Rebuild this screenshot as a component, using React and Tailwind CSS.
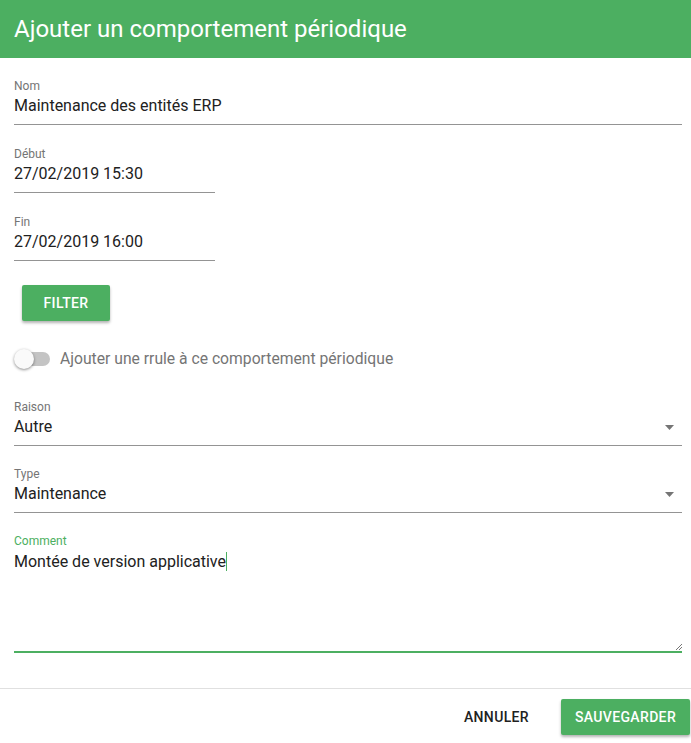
import React from "react";

function Field({ label, value, width = "w-full", select = false }) {
  return (
    <div className={width}>
      <div className="text-[12px] leading-[14px] text-[#757575]">{label}</div>
      <div className="flex items-center mt-[1px] pb-[6px] border-b border-[#949494]">
        <span className="flex-1 text-[16px] leading-[24px] text-[#212121]">{value}</span>
        {select && (
          <svg width="9" height="5" viewBox="0 0 9 5" className="mr-[8px]">
            <path d="M0 0 L9 0 L4.5 5 Z" fill="#757575" />
          </svg>
        )}
      </div>
    </div>
  );
}

export default function App() {
  return (
    <div className="w-[691px] h-[743px] bg-white flex flex-col" style={{ fontFamily: "Roboto, 'Liberation Sans', sans-serif" }}>
      <div className="h-[58px] bg-[#4caf61] flex items-center px-[14px]">
        <h1 className="text-white text-[24px] font-normal">Ajouter un comportement périodique</h1>
      </div>

      <div className="flex flex-col pl-[14px] pr-[9px] pt-[21px]">
        <Field label="Nom" value="Maintenance des entités ERP" />
        <div className="mt-[22px]"><Field label="Début" value="27/02/2019 15:30" width="w-[201px]" /></div>
        <div className="mt-[22px]"><Field label="Fin" value="27/02/2019 16:00" width="w-[201px]" /></div>

        <div className="pt-[24px] pl-[8px]">
          <button className="h-[36px] w-[88px] rounded-[2px] bg-[#4caf61] text-white text-[14px] font-medium tracking-wide shadow-[0_2px_3px_rgba(0,0,0,0.3)]">
            FILTER
          </button>
        </div>

        <div className="flex items-center mt-[26px] h-[24px]">
          <div className="relative w-[36px] h-[20px] flex items-center">
            <div className="ml-[4px] w-[32px] h-[14px] rounded-full bg-[#c4c4c4]" />
            <div className="absolute left-0 top-0 w-[20px] h-[20px] rounded-full bg-[#fafafa] shadow-[0_1px_3px_rgba(0,0,0,0.45)]" />
          </div>
          <span className="ml-[10px] text-[15.7px] text-[#757575]">Ajouter une rrule à ce comportement périodique</span>
        </div>

        <div className="mt-[29px]"><Field label="Raison" value="Autre" select /></div>
        <div className="mt-[21px]"><Field label="Type" value="Maintenance" select /></div>

        <div className="mt-[21px]">
          <div className="text-[12px] leading-[14px] text-[#4caf61]">Comment</div>
          <div className="relative h-[103px] border-b-2 border-[#4caf61] mt-[2px]">
            <span className="text-[16px] leading-[24px] text-[#212121]">Montée de version applicative</span>
            <span className="inline-block w-[1px] h-[19px] bg-[#4caf61] align-middle -mt-[3px]" />
            <svg width="7" height="7" viewBox="0 0 7 7" className="absolute right-0 bottom-[1px]">
              <path d="M1 7 L7 1 M4 7 L7 4" stroke="#777" strokeWidth="1" />
            </svg>
          </div>
        </div>
      </div>

      <div className="mt-[35px] border-t border-[#e0e0e0] flex items-center justify-end pt-[10px] pr-[1px]">
        <button className="h-[36px] px-[16px] text-[14px] font-medium text-[#212121] tracking-wide">ANNULER</button>
        <button className="ml-[16px] h-[36px] w-[129px] rounded-[2px] bg-[#4caf61] text-white text-[14px] font-medium tracking-wide shadow-[0_2px_3px_rgba(0,0,0,0.3)]">
          SAUVEGARDER
        </button>
      </div>
    </div>
  );
}
